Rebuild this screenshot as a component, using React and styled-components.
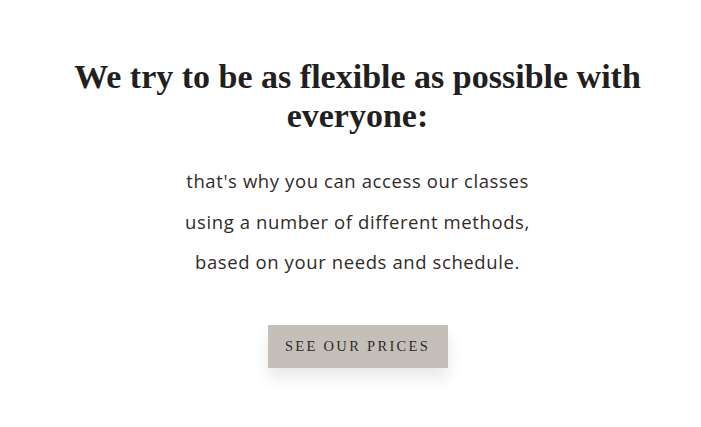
import styled, { createGlobalStyle } from "styled-components";

const GlobalStyle = createGlobalStyle`
  html, body {
    margin: 0;
    padding: 0;
    background: #ffffff;
  }
`;

const Section = styled.section`
  width: 100%;
  display: flex;
  flex-direction: column;
  align-items: center;
  padding: 57px 0 60px 14px;
  box-sizing: border-box;
  text-align: center;
`;

const Heading = styled.h2`
  margin: 0;
  max-width: 610px;
  font-family: "Liberation Serif", "DejaVu Serif", serif;
  font-weight: 700;
  font-size: 34px;
  line-height: 39px;
  color: #231f1e;
`;

const Copy = styled.div`
  margin-top: 26px;
  display: flex;
  flex-direction: column;
`;

const Line = styled.p`
  margin: 0;
  font-family: "Open Sans", "Noto Sans", sans-serif;
  font-size: 18.5px;
  letter-spacing: 0.6px;
  line-height: 40.5px;
  color: #302b2a;
`;

const PriceButton = styled.button`
  margin-top: 42px;
  width: 180px;
  height: 43px;
  border: none;
  background: #c5bfba;
  color: #2c2a2a;
  font-family: "Liberation Serif", "DejaVu Serif", serif;
  font-size: 14.5px;
  letter-spacing: 2.3px;
  text-transform: uppercase;
  box-shadow: 0 10px 16px rgba(0, 0, 0, 0.09);
  cursor: pointer;
`;

const lines = [
  "that's why you can access our classes",
  "using a number of different methods,",
  "based on your needs and schedule.",
];

export default function App() {
  return (
    <>
      <GlobalStyle />
      <Section>
        <Heading>We try to be as flexible as possible with everyone:</Heading>
        <Copy>
          {lines.map((text) => (
            <Line key={text}>{text}</Line>
          ))}
        </Copy>
        <PriceButton>See our prices</PriceButton>
      </Section>
    </>
  );
}
